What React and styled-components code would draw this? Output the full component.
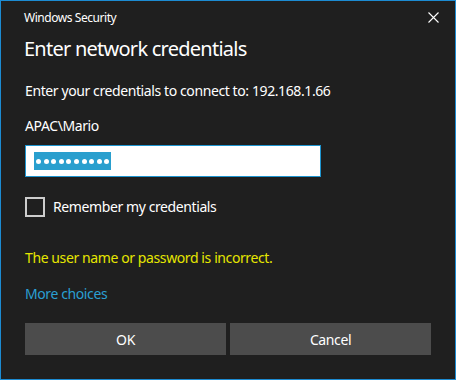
import React from "react";
import styled, { createGlobalStyle } from "styled-components";

const Global = createGlobalStyle`
  html, body { margin: 0; padding: 0; background: #1f1f1f; }
  * { box-sizing: border-box; }
`;

const Window = styled.div`
  width: 456px;
  height: 380px;
  border: 1px solid #1c8bd2;
  background: #1f1f1f;
  color: #ffffff;
  font-family: "Noto Sans", "Open Sans", sans-serif;
  display: flex;
  flex-direction: column;
`;

const TitleBar = styled.div`
  height: 32px;
  display: flex;
  align-items: center;
  justify-content: space-between;
  padding: 0 16px 0 23px;
`;

const TitleText = styled.div`
  font-size: 12px;
  letter-spacing: -0.45px;
  color: #ffffff;
`;

const CloseButton = styled.div`
  width: 12px;
  height: 12px;
  display: flex;
  align-items: center;
  justify-content: center;
`;

const Body = styled.div`
  padding: 0 24px;
  display: flex;
  flex-direction: column;
`;

const Heading = styled.div`
  font-size: 20px;
  line-height: 28px;
  letter-spacing: -0.75px;
  margin-top: 2px;
  margin-left: -1px;
  color: #ffffff;
`;

const Text = styled.div`
  font-size: 14px;
  line-height: 20px;
  letter-spacing: -0.4px;
  color: ${(p) => p.$color || "#ffffff"};
  margin-top: ${(p) => p.$mt || 0}px;
`;

const Input = styled.div`
  margin-top: 9px;
  width: 296px;
  height: 32px;
  background: #ffffff;
  border: 1px solid #1e95d0;
  display: flex;
  align-items: center;
  padding-left: 8px;
`;

const Selection = styled.div`
  height: 18px;
  background: #299fce;
  display: flex;
  align-items: center;
  gap: 2.6px;
  padding: 0 2px 0 2px;
`;

const Dot = styled.span`
  width: 5px;
  height: 5px;
  border-radius: 50%;
  background: #ffffff;
`;

const CheckRow = styled.div`
  margin-top: 20px;
  display: flex;
  align-items: center;
  gap: 8px;
`;

const Box = styled.div`
  width: 20px;
  height: 20px;
  border: 2px solid #cccccc;
`;

const ButtonRow = styled.div`
  margin-top: 19px;
  display: grid;
  grid-template-columns: 1fr 1fr;
  gap: 4px;
`;

const Button = styled.div`
  height: 32px;
  background: #4c4c4c;
  color: #ffffff;
  font-size: 14px;
  letter-spacing: -0.4px;
  display: flex;
  align-items: center;
  justify-content: center;
`;

export default function App() {
  return (
    <>
      <Global />
      <Window>
        <TitleBar>
          <TitleText>Windows Security</TitleText>
          <CloseButton>
            <svg width="11" height="11" viewBox="0 0 11 11">
              <path d="M0.5 0.5 L10.5 10.5 M10.5 0.5 L0.5 10.5" stroke="#ffffff" strokeWidth="1.1" />
            </svg>
          </CloseButton>
        </TitleBar>
        <Body>
          <Heading>Enter network credentials</Heading>
          <Text $mt={18}>Enter your credentials to connect to: 192.168.1.66</Text>
          <Text $mt={15}>APAC\Mario</Text>
          <Input>
            <Selection>
              {Array.from({ length: 10 }).map((_, i) => (
                <Dot key={i} />
              ))}
            </Selection>
          </Input>
          <CheckRow>
            <Box />
            <Text>Remember my credentials</Text>
          </CheckRow>
          <Text $mt={31} $color="#e6e600">The user name or password is incorrect.</Text>
          <Text $mt={16} $color="#2a9fd2">More choices</Text>
          <ButtonRow>
            <Button>OK</Button>
            <Button>Cancel</Button>
          </ButtonRow>
        </Body>
      </Window>
    </>
  );
}
